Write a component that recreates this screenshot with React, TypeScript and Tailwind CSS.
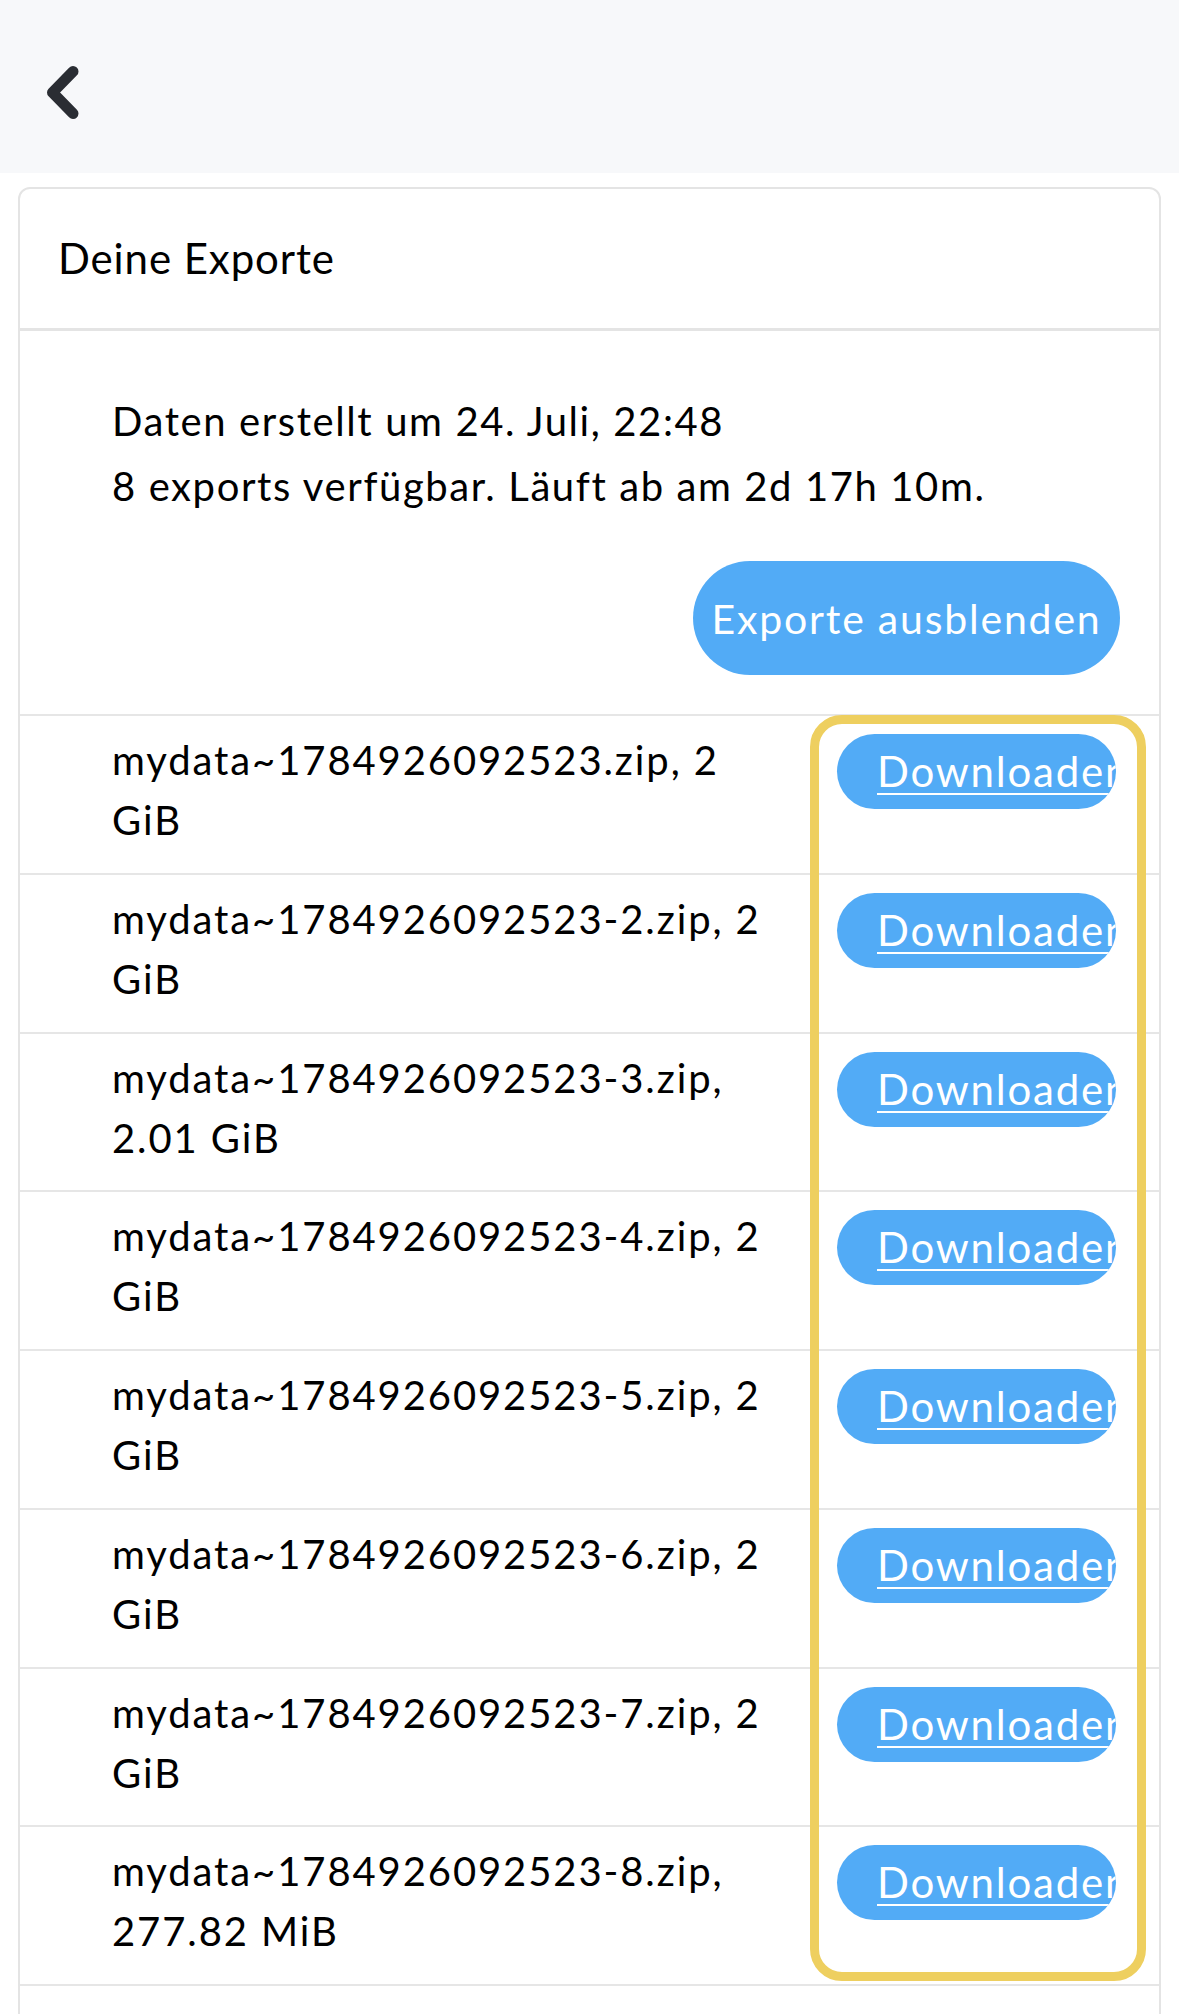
import React from "react";

const files = [
  "mydata~1784926092523.zip, 2 GiB",
  "mydata~1784926092523-2.zip, 2 GiB",
  "mydata~1784926092523-3.zip, 2.01 GiB",
  "mydata~1784926092523-4.zip, 2 GiB",
  "mydata~1784926092523-5.zip, 2 GiB",
  "mydata~1784926092523-6.zip, 2 GiB",
  "mydata~1784926092523-7.zip, 2 GiB",
  "mydata~1784926092523-8.zip, 277.82 MiB",
];

export default function App() {
  return (
    <div className="w-[1179px] h-[2014px] overflow-hidden bg-white text-black" style={{ fontFamily: "Lato, 'Noto Sans', sans-serif" }}>
      <div className="h-[173px] bg-[#f7f8fa] pt-[66px] pl-[47px]">
        <svg width="32" height="53" viewBox="0 0 32 53" fill="none">
          <polyline points="26,5.5 5.5,26.5 26,47.5" stroke="#2a2d33" strokeWidth="11" strokeLinecap="round" strokeLinejoin="round" />
        </svg>
      </div>
      <div className="mt-[14px] mx-[18px] border-2 border-[#e4e4e4] rounded-[12px] bg-white">
        <div className="h-[142px] flex items-center pl-[38px] border-b-[3px] border-[#e4e4e4] text-[42px] tracking-[0.9px]">
          Deine Exporte
        </div>
        <div className="pt-[58px] pb-[39px] pl-[92px] pr-[39px] text-[40px] leading-[65px] tracking-[1.6px]">
          <div>Daten erstellt um 24. Juli, 22:48</div>
          <div>8 exports verfügbar. Läuft ab am 2d 17h 10m.</div>
          <div className="flex justify-end mt-[42px]">
            <button className="h-[114px] w-[427px] rounded-full bg-[#52abf6] text-white text-[41px] tracking-[1.8px]">
              Exporte ausblenden
            </button>
          </div>
        </div>
        <div className="relative">
          {files.map((f, i) => (
            <div key={i} className="flex items-start border-t-2 border-[#e6e6e6] pt-[14px] pb-[22.75px] pl-[92px]">
              <div className="w-[660px] text-[40px] leading-[60px] tracking-[1.9px]">{f}</div>
              <div className="ml-[65px] mt-[4px] w-[279px] h-[75px] shrink-0 rounded-full bg-[#52abf6] overflow-hidden pl-[40px] flex items-center">
                <span className="text-white text-[42px] underline decoration-[2px] underline-offset-[6px] whitespace-nowrap tracking-[1.8px]">Downloaden</span>
              </div>
            </div>
          ))}
          <div className="border-t-2 border-[#e6e6e6] h-[200px]"></div>
          <div className="absolute left-[790px] top-[1px] w-[336px] h-[1266px] border-[9px] border-[#eecf5f] rounded-[32px] pointer-events-none"></div>
        </div>
      </div>
    </div>
  );
}
